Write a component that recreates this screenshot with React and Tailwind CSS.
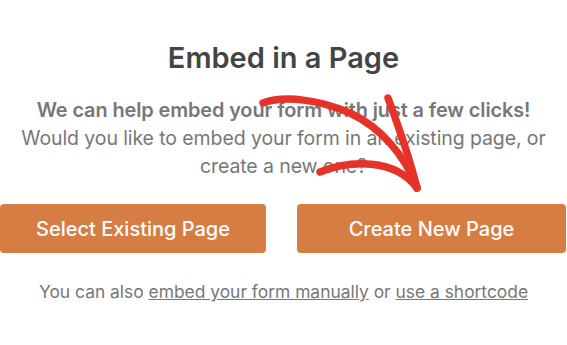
import React from 'react';

const EmbedArrow = () => (
  <svg
    className="absolute inset-0 pointer-events-none"
    width="567"
    height="345"
    viewBox="0 0 567 345"
    fill="none"
  >
    <g stroke="#e6332a" strokeWidth="7.5" strokeLinecap="round" strokeLinejoin="round">
      <path d="M263 103 C 285 95, 320 100, 350 113 C 380 127, 405 155, 417 188" />
      <path d="M388 98 C 398 125, 410 160, 417 188" />
      <path d="M320 172 C 350 160, 395 158, 417 188" />
    </g>
  </svg>
);

const App = () => {
  return (
    <div className="relative w-[567px] h-[345px] bg-white overflow-hidden font-['Inter',sans-serif] text-center">
      <h1 className="pt-[42px] text-[29px] leading-[32px] font-semibold text-[#444444]">Embed in a Page</h1>

      <p className="mt-[22px] text-[19.5px] leading-[28px] text-[#777777] tracking-[-0.1px]">
        <span className="block font-semibold text-[19.9px]">We can help embed your form with just a few clicks!</span>
        Would you like to embed your form in an existing page, or
        <br />
        create a new one?
      </p>

      <div className="mt-[24px] flex gap-[31px]">
        <button className="w-[266px] h-[49px] rounded-[4px] bg-[#d57d43] text-white text-[20px] font-medium">
          Select Existing Page
        </button>
        <button className="w-[269px] h-[49px] rounded-[4px] bg-[#d57d43] text-white text-[20px] font-medium">
          Create New Page
        </button>
      </div>

      <p className="mt-[27px] text-[17.4px] leading-[24px] text-[#777777]">
        You can also <a href="#" className="underline">embed your form manually</a> or{' '}
        <a href="#" className="underline">use a shortcode</a>
      </p>

      <EmbedArrow />
    </div>
  );
};

export default App;
